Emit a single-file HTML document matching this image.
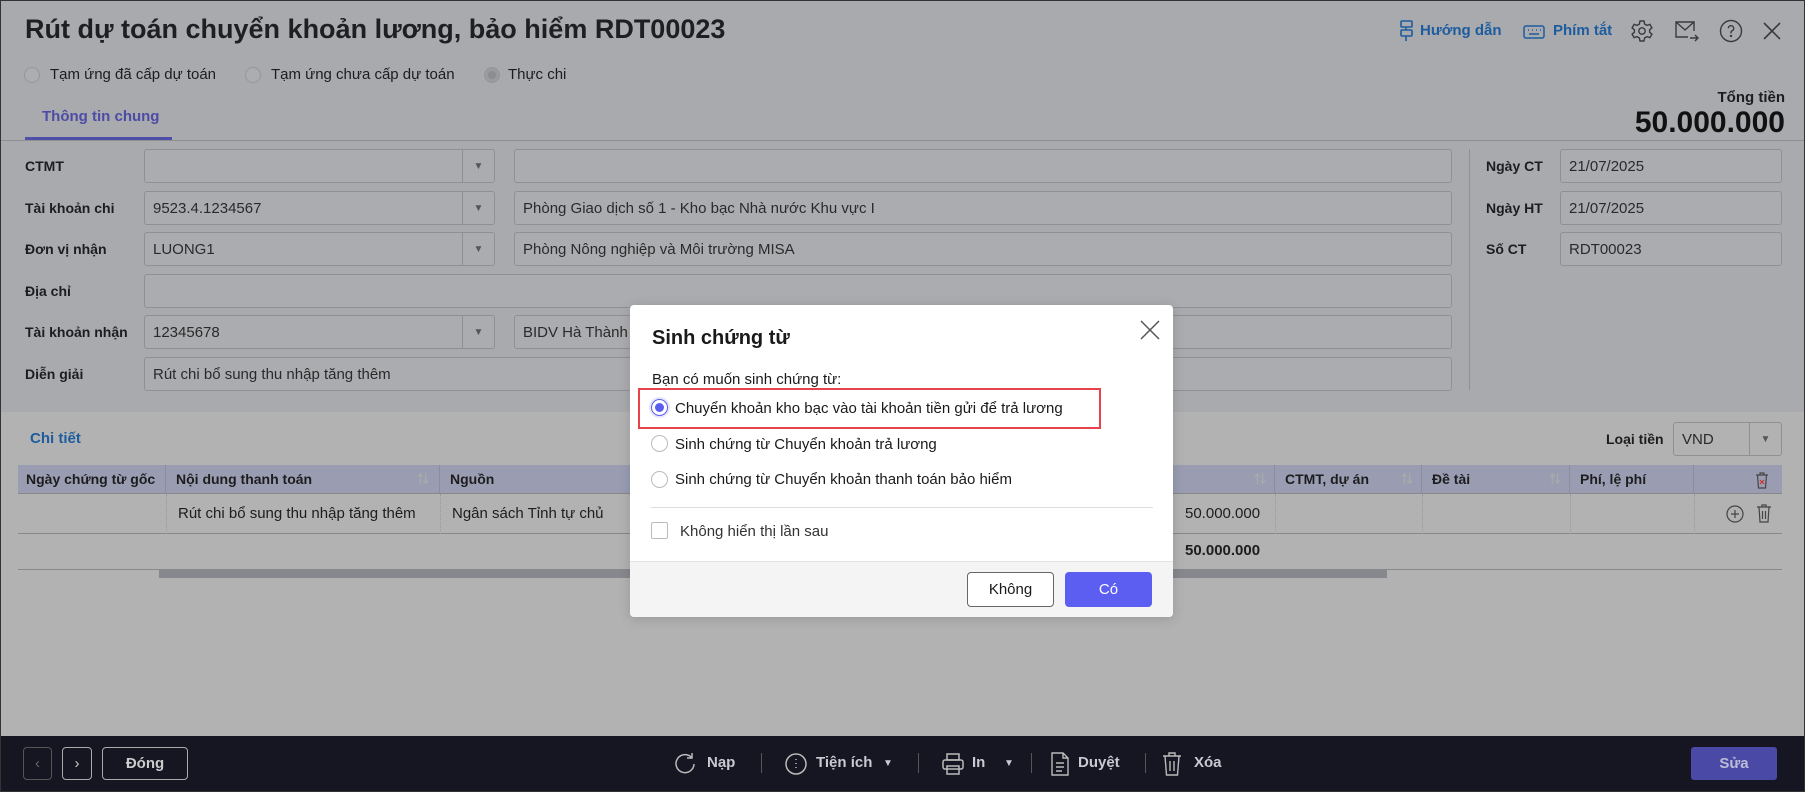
<!DOCTYPE html>
<html><head><meta charset="utf-8"><style>
*{box-sizing:border-box;margin:0;padding:0}
body{width:1805px;height:792px;overflow:hidden;position:relative;background:#a9aaad;font-family:"Liberation Sans","Noto Sans CJK SC",sans-serif;font-size:15px;color:#1d1d1f}
.a{position:absolute;white-space:nowrap}
.lbl{position:absolute;font-weight:bold;font-size:14px;color:#1d1d1f}
.inp{position:absolute;border:1px solid #8f9094;border-radius:3px;height:34px;padding:0 8px;line-height:33px;color:#2a2a2a;background:#abacaf}
.dd{position:absolute;top:0;bottom:0;right:0;width:32px;border-left:1px solid #8f9094;font-size:10px;text-align:center;color:#555}
.rad{position:absolute;width:16px;height:16px;border-radius:50%;border:1px solid #959699;background:#acadaf}
.th{position:absolute;top:0;height:29px;line-height:29px;font-weight:bold;font-size:14px;padding-left:10px;border-right:1px solid #8a8da0;white-space:nowrap;overflow:hidden}
.ft{position:absolute;color:#c9c9d2;font-size:15px;font-weight:bold;top:754px}
.sep{position:absolute;top:753px;width:1px;height:20px;background:#555}
</style></head><body>
<div style="position:absolute;inset:0;border:1px solid #333;pointer-events:none;z-index:9"></div>
<div class="a" style="left:25px;top:14px;font-size:27px;font-weight:bold;color:#1e1f22">Rút dự toán chuyển khoản lương, bảo hiểm RDT00023</div>
<svg class="a" style="left:1398px;top:19px" width="18" height="24" viewBox="0 0 18 24" fill="none" stroke="#1d5c9e" stroke-width="1.6"><rect x="3" y="2" width="11" height="6" rx="1"/><rect x="3" y="11" width="11" height="6" rx="1"/><path d="M8 8v3M8 17v5"/></svg>
<div class="a" style="left:1420px;top:22px;color:#1d5c9e;font-weight:bold;font-size:15px">Hướng dẫn</div>
<svg class="a" style="left:1523px;top:24px" width="22" height="16" viewBox="0 0 22 16" fill="none" stroke="#1d5c9e" stroke-width="1.5"><rect x="1" y="2" width="20" height="12" rx="2"/><path d="M5 6h1M9 6h1M13 6h1M17 6h1M6 10h10"/></svg>
<div class="a" style="left:1553px;top:22px;color:#1d5c9e;font-weight:bold;font-size:15px">Phím tắt</div>
<svg class="a" style="left:1630px;top:19px" width="24" height="24" viewBox="0 0 24 24" fill="none" stroke="#3a3a3e" stroke-width="1.4"><circle cx="12" cy="12" r="3.2"/><path d="M10 2h4l.6 3 2.4 1.4 2.9-1 2 3.4-2.3 2v2.4l2.3 2-2 3.4-2.9-1L14.6 19 14 22h-4l-.6-3L7 17.6l-2.9 1-2-3.4 2.3-2v-2.4l-2.3-2 2-3.4 2.9 1L9.4 5z"/></svg>
<svg class="a" style="left:1674px;top:19px" width="26" height="24" viewBox="0 0 26 24" fill="none" stroke="#3a3a3e" stroke-width="1.4"><path d="M20 12V3H2v15h12M2 3l9 8 9-8M16 19h8M21 16l3 3-3 3"/></svg>
<svg class="a" style="left:1719px;top:19px" width="24" height="24" viewBox="0 0 24 24" fill="none" stroke="#3a3a3e" stroke-width="1.4"><circle cx="12" cy="12" r="10.5"/><path d="M9.3 9.3a2.7 2.7 0 1 1 3.6 2.6c-.6.3-.9.8-.9 1.5v1"/><circle cx="12" cy="17" r=".5" fill="#3a3a3e"/></svg>
<svg class="a" style="left:1762px;top:21px" width="20" height="20" viewBox="0 0 20 20" stroke="#3a3a3e" stroke-width="1.6"><path d="M2 2l16 16M18 2L2 18"/></svg>
<div class="rad" style="left:24px;top:67px"></div><div class="a" style="left:50px;top:66px">Tạm ứng đã cấp dự toán</div>
<div class="rad" style="left:245px;top:67px"></div><div class="a" style="left:271px;top:66px">Tạm ứng chưa cấp dự toán</div>
<div class="rad" style="left:484px;top:67px;background:#9a9b9e"><div style="position:absolute;left:3px;top:3px;width:8px;height:8px;border-radius:50%;background:#8c8d90"></div></div><div class="a" style="left:508px;top:66px">Thực chi</div>
<div class="a" style="left:42px;top:108px;color:#4c4ca6;font-weight:bold;font-size:15px">Thông tin chung</div>
<div class="a" style="left:0;top:140px;width:1805px;height:1px;background:#8e8f92"></div>
<div class="a" style="left:25px;top:137px;width:147px;height:3px;background:#4f4fa8"></div>
<div class="a" style="right:20px;top:89px;font-size:15px;font-weight:bold">Tổng tiền</div>
<div class="a" style="right:20px;top:106px;font-size:30px;font-weight:bold;color:#111">50.000.000</div>
<div class="lbl" style="left:25px;top:158px">CTMT</div>
<div class="inp" style="left:144px;top:149px;width:351px"><div class="dd">▼</div></div>
<div class="inp" style="left:514px;top:149px;width:938px"></div>
<div class="lbl" style="left:25px;top:200px">Tài khoản chi</div>
<div class="inp" style="left:144px;top:191px;width:351px">9523.4.1234567<div class="dd">▼</div></div>
<div class="inp" style="left:514px;top:191px;width:938px">Phòng Giao dịch số 1 - Kho bạc Nhà nước Khu vực I</div>
<div class="lbl" style="left:25px;top:241px">Đơn vị nhận</div>
<div class="inp" style="left:144px;top:232px;width:351px">LUONG1<div class="dd">▼</div></div>
<div class="inp" style="left:514px;top:232px;width:938px">Phòng Nông nghiệp và Môi trường MISA</div>
<div class="lbl" style="left:25px;top:283px">Địa chỉ</div>
<div class="inp" style="left:144px;top:274px;width:1308px"></div>
<div class="lbl" style="left:25px;top:324px">Tài khoản nhận</div>
<div class="inp" style="left:144px;top:315px;width:351px">12345678<div class="dd">▼</div></div>
<div class="inp" style="left:514px;top:315px;width:938px">BIDV Hà Thành</div>
<div class="lbl" style="left:25px;top:366px">Diễn giải</div>
<div class="inp" style="left:144px;top:357px;width:1308px">Rút chi bổ sung thu nhập tăng thêm</div>
<div class="a" style="left:1469px;top:149px;width:1px;height:241px;background:#909194"></div>
<div class="lbl" style="left:1486px;top:158px">Ngày CT</div>
<div class="inp" style="left:1560px;top:149px;width:222px">21/07/2025</div>
<div class="lbl" style="left:1486px;top:200px">Ngày HT</div>
<div class="inp" style="left:1560px;top:191px;width:222px">21/07/2025</div>
<div class="lbl" style="left:1486px;top:241px">Số CT</div>
<div class="inp" style="left:1560px;top:232px;width:222px">RDT00023</div>
<div class="a" style="left:0;top:412px;width:1805px;height:324px;background:#b2b2b2"></div>
<div class="a" style="left:30px;top:430px;color:#1d5c9e;font-weight:bold;font-size:15px">Chi tiết</div>
<div class="lbl" style="left:1606px;top:431px">Loại tiền</div>
<div class="inp" style="left:1673px;top:422px;width:109px;background:#b2b2b2">VND<div class="dd">▼</div></div>
<div class="a" style="left:18px;top:465px;width:1764px;height:29px;background:#9a9db2;border-bottom:1px solid #888">
<div class="th" style="left:0;width:148px;padding-left:8px">Ngày chứng từ gốc</div>
<div class="th" style="left:148px;width:274px">Nội dung thanh toán<span style="position:absolute;right:10px;color:#aaa;font-size:12px">⇅</span></div>
<div class="th" style="left:422px;width:400px">Nguồn</div>
<div class="th" style="left:1080px;width:177px;border-left:1px solid #8a8da0">Số tiền<span style="position:absolute;right:8px;color:#aaa;font-size:12px">⇅</span></div>
<div class="th" style="left:1257px;width:147px">CTMT, dự án<span style="position:absolute;right:8px;color:#aaa;font-size:12px">⇅</span></div>
<div class="th" style="left:1404px;width:148px">Đề tài<span style="position:absolute;right:8px;color:#aaa;font-size:12px">⇅</span></div>
<div class="th" style="left:1552px;width:124px">Phí, lệ phí</div>
<svg class="a" style="left:1737px;top:6px" width="14" height="18" viewBox="0 0 14 18" fill="none" stroke="#444" stroke-width="1.2"><path d="M1 4h12M5 4V2h4v2M2.5 4l1 13h7l1-13"/><path d="M5 9l4 4M9 9l-4 4" stroke="#c33"/></svg>
</div>
<div class="a" style="left:18px;top:494px;width:1764px;height:40px;border-bottom:1px solid #888">
<div class="a" style="left:148px;top:0;height:40px;border-left:1px dotted #999"></div>
<div class="a" style="left:422px;top:0;height:40px;border-left:1px dotted #999"></div>
<div class="a" style="left:1257px;top:0;height:40px;border-left:1px dotted #999"></div>
<div class="a" style="left:1404px;top:0;height:40px;border-left:1px dotted #999"></div>
<div class="a" style="left:1552px;top:0;height:40px;border-left:1px dotted #999"></div>
<div class="a" style="left:1676px;top:0;height:40px;border-left:1px dotted #999"></div>
<div class="a" style="left:160px;top:11px">Rút chi bổ sung thu nhập tăng thêm</div>
<div class="a" style="left:434px;top:11px">Ngân sách Tỉnh tự chủ</div>
<div class="a" style="left:1167px;top:11px">50.000.000</div>
<svg class="a" style="left:1708px;top:11px" width="18" height="18" viewBox="0 0 18 18" fill="none" stroke="#444" stroke-width="1.2"><circle cx="9" cy="9" r="8"/><path d="M9 5v8M5 9h8"/></svg>
<svg class="a" style="left:1738px;top:9px" width="16" height="20" viewBox="0 0 16 20" fill="none" stroke="#444" stroke-width="1.2"><path d="M1 4h14M6 4V2h4v2M3 4l1 15h8l1-15M6.5 8v8M9.5 8v8"/></svg>
</div>
<div class="a" style="left:1185px;top:542px;font-weight:bold">50.000.000</div>
<div class="a" style="left:18px;top:569px;width:1764px;height:1px;background:#888"></div>
<div class="a" style="left:159px;top:569px;width:1228px;height:9px;background:#86888d"></div>
<div class="a" style="left:0;top:736px;width:1805px;height:56px;background:#161622"></div>
<div class="a" style="left:23px;top:747px;width:29px;height:33px;border:1px solid #555;border-radius:4px;color:#666;text-align:center;line-height:31px">‹</div>
<div class="a" style="left:62px;top:747px;width:30px;height:33px;border:1px solid #aaa;border-radius:4px;color:#ccc;text-align:center;line-height:31px">›</div>
<div class="a" style="left:102px;top:747px;width:86px;height:33px;border:1px solid #aaa;border-radius:4px;color:#ccc;text-align:center;line-height:31px;font-weight:bold">Đóng</div>
<svg class="a" style="left:675px;top:752px" width="22" height="24" viewBox="0 0 22 24" fill="none" stroke="#bbb" stroke-width="1.5"><path d="M17 6a9 9 0 1 0 2 6M17 1v5h-5"/></svg>
<div class="ft" style="left:707px">Nạp</div>
<div class="sep" style="left:761px"></div>
<svg class="a" style="left:785px;top:752px" width="22" height="24" viewBox="0 0 22 24" fill="none" stroke="#bbb" stroke-width="1.5"><circle cx="11" cy="12" r="10"/><path d="M11 7v1M11 11v1M11 15v1"/></svg>
<div class="ft" style="left:816px">Tiện ích</div><div class="ft" style="left:883px;font-size:10px;top:758px">▼</div>
<div class="sep" style="left:918px"></div>
<svg class="a" style="left:942px;top:752px" width="22" height="24" viewBox="0 0 22 24" fill="none" stroke="#bbb" stroke-width="1.5"><rect x="5" y="2" width="12" height="6"/><rect x="1" y="8" width="20" height="9" rx="2"/><rect x="5" y="14" width="12" height="8"/></svg>
<div class="ft" style="left:972px">In</div><div class="ft" style="left:1004px;font-size:10px;top:758px">▼</div>
<div class="sep" style="left:1031px"></div>
<svg class="a" style="left:1050px;top:751px" width="20" height="26" viewBox="0 0 20 26" fill="none" stroke="#bbb" stroke-width="1.4"><path d="M2 2h11l5 5v17H2zM13 2v5h5M6 12h8M6 16h8M6 20h6"/></svg>
<div class="ft" style="left:1078px">Duyệt</div>
<div class="sep" style="left:1145px"></div>
<svg class="a" style="left:1162px;top:751px" width="20" height="26" viewBox="0 0 20 26" fill="none" stroke="#bbb" stroke-width="1.4"><path d="M1 5h18M7 5V2h6v3M3 5l1.5 19h11L17 5M8 10v10M12 10v10"/></svg>
<div class="ft" style="left:1194px">Xóa</div>
<div class="a" style="left:1691px;top:747px;width:86px;height:33px;background:#4a4aa6;border-radius:3px;color:#bcbcd8;text-align:center;line-height:33px;font-weight:bold">Sửa</div>
<div class="a" style="left:630px;top:305px;width:543px;height:312px;background:#fff;border-radius:4px;overflow:hidden;box-shadow:0 2px 12px rgba(0,0,0,.15);color:#1a1a1a">
<div class="a" style="left:22px;top:22px;font-size:20px;font-weight:bold">Sinh chứng từ</div>
<svg class="a" style="left:510px;top:15px" width="20" height="20" viewBox="0 0 20 20" stroke="#555" stroke-width="1.5"><path d="M1 1l18 18M19 1L1 19"/></svg>
<div class="a" style="left:22px;top:66px">Bạn có muốn sinh chứng từ:</div>
<div class="a" style="left:8px;top:83px;width:463px;height:41px;border:2px solid #e8424a"></div>
<div class="a" style="left:21px;top:94px;width:17px;height:17px;border-radius:50%;border:1px solid #5b5ef0;box-shadow:0 0 0 2px #e6e7fd"><div style="position:absolute;left:3px;top:3px;width:9px;height:9px;border-radius:50%;background:#5b5ef0"></div></div>
<div class="a" style="left:45px;top:95px">Chuyển khoản kho bạc vào tài khoản tiền gửi để trả lương</div>
<div class="a" style="left:21px;top:130px;width:17px;height:17px;border-radius:50%;border:1px solid #bbb"></div>
<div class="a" style="left:45px;top:131px">Sinh chứng từ Chuyển khoản trả lương</div>
<div class="a" style="left:21px;top:166px;width:17px;height:17px;border-radius:50%;border:1px solid #bbb"></div>
<div class="a" style="left:45px;top:166px">Sinh chứng từ Chuyển khoản thanh toán bảo hiểm</div>
<div class="a" style="left:21px;top:202px;width:502px;height:1px;background:#ddd"></div>
<div class="a" style="left:21px;top:217px;width:17px;height:17px;border:1px solid #bbb;border-radius:2px"></div>
<div class="a" style="left:50px;top:218px;color:#333">Không hiển thị lần sau</div>
<div class="a" style="left:0;top:256px;width:543px;height:56px;background:#f4f4f4;border-top:1px solid #e3e3e3"></div>
<div class="a" style="left:337px;top:267px;width:87px;height:35px;border:1px solid #666;border-radius:4px;background:#fff;text-align:center;line-height:33px">Không</div>
<div class="a" style="left:435px;top:267px;width:87px;height:35px;border-radius:4px;background:#5b5ef0;color:#fff;text-align:center;line-height:35px">Có</div>
</div>
</body></html>
